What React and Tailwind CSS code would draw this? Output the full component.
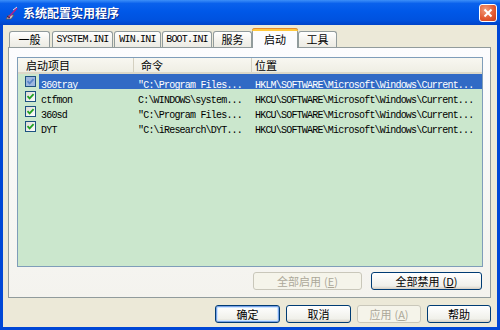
import React from "react";

const CJK = { fontFamily: '"Noto Sans CJK SC", "Noto Sans", sans-serif' };
const MONO = { fontFamily: '"Liberation Mono", "Noto Sans CJK SC", monospace' };

function Mono({ children, className = "" }) {
  return (
    <span className={"text-[10px] tracking-[-0.8px] whitespace-nowrap " + className} style={MONO}>
      {children}
    </span>
  );
}

function Tab({ label, mono, w, ml, selected }) {
  if (selected) {
    return (
      <div
        className={`relative z-10 h-[20px] -mb-px flex items-center justify-center rounded-t-[3px] border border-b-0 border-[#919b9c] bg-[#fcfcfe] ${w} ${ml}`}
      >
        <div className="absolute left-[-1px] right-[-1px] top-[-1px] h-[3px] rounded-t-[3px] bg-[#ffc83c] border-t border-[#e68b2c]" />
        <span className="text-[11px] text-black mt-[1px]" style={CJK}>{label}</span>
      </div>
    );
  }
  return (
    <div
      className={`h-[16px] flex items-center justify-center rounded-t-[3px] border border-b-0 border-[#919b9c] bg-[linear-gradient(to_bottom,#ffffff,#f3f2ec_60%,#ecebe4)] ${w} ${ml}`}
    >
      {mono ? (
        <Mono className="text-black">{label}</Mono>
      ) : (
        <span className="text-[11px] text-black" style={CJK}>{label}</span>
      )}
    </div>
  );
}

function Check({ sel }) {
  return (
    <div
      className={`w-[11px] h-[11px] border border-[#1c5180] flex items-center justify-center ${
        sel ? "bg-[#9db7df]" : "bg-[linear-gradient(135deg,#dcdbd5,#ffffff)]"
      }`}
    >
      <svg width="9" height="9" viewBox="0 0 9 9">
        <path d="M1.5 4.2 L3.6 6.4 L7.6 2.2" fill="none" stroke={sel ? "#5b86c8" : "#21a121"} strokeWidth="1.8" />
      </svg>
    </div>
  );
}

function Row({ name, cmd, loc, sel }) {
  return (
    <div className="h-[15px] flex items-center">
      <div className="w-[21px] pl-[7px] flex items-center">
        <Check sel={sel} />
      </div>
      <div className={`flex-1 h-full flex items-center ${sel ? "bg-[#316ac5] text-white" : "text-black"}`}>
        <div className="w-[95px] pl-[2px]"><Mono>{name}</Mono></div>
        <div className="w-[118px] pl-[4px]"><Mono>{cmd}</Mono></div>
        <div className="flex-1 pl-[3px] overflow-hidden"><Mono>{loc}</Mono></div>
      </div>
    </div>
  );
}

function Btn({ children, w, disabled, def }) {
  return (
    <div
      className={`h-[18px] ${w} rounded-[3px] border flex items-center justify-center text-[11px] ${
        disabled
          ? "border-[#c9c7ba] bg-[#f5f4ea] text-[#aca899]"
          : def
          ? "border-[#003c74] bg-[linear-gradient(to_bottom,#ffffff,#f0f0ea_80%,#d6d0c5)] text-black shadow-[inset_0_0_0_1px_#7ba2e7,inset_0_0_0_2px_#cee7ff]"
          : "border-[#003c74] bg-[linear-gradient(to_bottom,#ffffff,#f0f0ea_80%,#d6d0c5)] text-black"
      }`}
      style={CJK}
    >
      {children}
    </div>
  );
}

export default function App() {
  return (
    <div className="w-[500px] h-[330px] flex flex-col bg-[#0047d6] overflow-hidden">
      {/* title bar */}
      <div className="h-[25px] flex items-center bg-[linear-gradient(to_bottom,#3d8ff8_0%,#0a61ec_14%,#0058e8_45%,#0052df_80%,#0043c8_100%)]">
        <div className="ml-[5px] w-[14px] h-[14px]">
          <svg width="14" height="14" viewBox="0 0 14 14">
            <path d="M1 13 L4 9 L9 9 L6 13 Z" fill="#c8c8c8" stroke="#555" strokeWidth="0.8" />
            <path d="M3 12 L12 2" stroke="#b0208a" strokeWidth="1.6" />
            <path d="M2 10 L5 12" stroke="#333" strokeWidth="1" />
            <path d="M8 4 L12 1" stroke="#e0e0e0" strokeWidth="1" />
          </svg>
        </div>
        <span
          className="ml-[4px] text-[12px] font-bold text-white [text-shadow:1px_1px_0_#0a2a8a]"
          style={CJK}
        >
          系统配置实用程序
        </span>
        <div className="ml-auto mr-[3px] w-[18px] h-[18px] rounded-[3px] border border-white bg-[radial-gradient(circle_at_35%_30%,#f19d7c,#e2572f_60%,#c7401f)] flex items-center justify-center">
          <svg width="10" height="10" viewBox="0 0 10 10">
            <path d="M1.5 1.5 L8.5 8.5 M8.5 1.5 L1.5 8.5" stroke="white" strokeWidth="2" />
          </svg>
        </div>
      </div>

      {/* body */}
      <div className="flex-1 mx-[3px] mb-[3px] bg-[#ece9d8] flex flex-col">
        {/* tabs */}
        <div className="mt-[3px] h-[19px] pl-[6px] flex items-end">
          <Tab label="一般" w="w-[41px]" ml="" />
          <Tab label="SYSTEM.INI" mono w="w-[61px]" ml="ml-[2px]" />
          <Tab label="WIN.INI" mono w="w-[47px]" ml="ml-[1px]" />
          <Tab label="BOOT.INI" mono w="w-[50px]" ml="ml-[1px]" />
          <Tab label="服务" w="w-[39px]" ml="ml-[1px]" />
          <Tab label="启动" w="w-[46px]" ml="" selected />
          <Tab label="工具" w="w-[39px]" ml="" />
        </div>

        {/* panel */}
        <div className="ml-[5px] mr-[6px] h-[251px] border border-[#919b9c] bg-[linear-gradient(to_bottom,#fcfcfe,#f4f3ee)] flex flex-col pt-[9px] pl-[8px] pr-[7px]">
          <div className="h-[210px] border border-[#7f9db9] bg-[#cbe7cd] flex flex-col">
            <div className="h-[16px] flex bg-[linear-gradient(to_bottom,#f8f7f1,#efeee4)] border-b-2 border-[#dcd8c8] text-black text-[11px]" style={CJK}>
              <div className="w-[116px] pl-[8px] flex items-center border-r border-[#d4d0c0]">启动项目</div>
              <div className="w-[118px] pl-[7px] flex items-center border-r border-[#d4d0c0]">命令</div>
              <div className="flex-1 pl-[3px] flex items-center">位置</div>
            </div>
            <Row sel name="360tray" cmd={'"C:\\Program Files...'} loc="HKLM\SOFTWARE\Microsoft\Windows\Current..." />
            <Row name="ctfmon" cmd="C:\WINDOWS\system..." loc="HKCU\SOFTWARE\Microsoft\Windows\Current..." />
            <Row name="360sd" cmd={'"C:\\Program Files...'} loc="HKCU\SOFTWARE\Microsoft\Windows\Current..." />
            <Row name="DYT" cmd={'"C:\\iResearch\\DYT...'} loc="HKCU\SOFTWARE\Microsoft\Windows\Current..." />
          </div>
          <div className="mt-[5px] flex justify-end gap-[9px] pr-[1px]">
            <Btn w="w-[109px]" disabled>
              全部启用 <span className="ml-[3px]">(<span className="underline">E</span>)</span>
            </Btn>
            <Btn w="w-[111px]">
              全部禁用 <span className="ml-[3px]">(<span className="underline">D</span>)</span>
            </Btn>
          </div>
        </div>

        {/* bottom buttons */}
        <div className="mt-[7px] mr-[6px] flex justify-end gap-[6px]">
          <Btn w="w-[65px]" def>确定</Btn>
          <Btn w="w-[65px]">取消</Btn>
          <Btn w="w-[64px]" disabled>
            应用 <span className="ml-[3px]">(<span className="underline">A</span>)</span>
          </Btn>
          <Btn w="w-[64px]">帮助</Btn>
        </div>
      </div>
    </div>
  );
}
